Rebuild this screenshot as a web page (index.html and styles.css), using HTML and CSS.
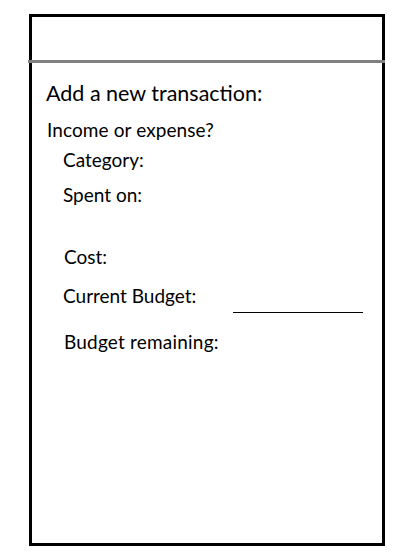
FILE: index.html
```html
<!DOCTYPE html>
<html lang="en">
<head>
<meta charset="utf-8">
<title>Add a new transaction</title>
<link rel="stylesheet" href="styles.css">
</head>
<body>
<div class="frame">
  <div class="topbar"></div>
  <div class="rule"></div>
  <div class="form">
    <h1 class="title">Add a new transaction:</h1>
    <p class="question">Income or expense?</p>
    <div class="field category">Category:</div>
    <div class="field spent">Spent on:</div>
    <div class="field cost">Cost:</div>
    <div class="field budget-row">
      <span class="label">Current Budget:</span>
      <span class="blank"></span>
    </div>
    <div class="field remaining">Budget remaining:</div>
  </div>
</div>
</body>
</html>
```
FILE: styles.css
```css
html, body {
  margin: 0;
  padding: 0;
  background: #fff;
}
body {
  font-family: Lato, "Open Sans", "Liberation Sans", sans-serif;
  color: #000;
}
.frame {
  box-sizing: border-box;
  margin: 14px 0 0 29px;
  width: 356px;
  height: 532px;
  border: 3px solid #000;
  display: flex;
  flex-direction: column;
}
.topbar {
  height: 43px;
  flex: none;
}
.rule {
  flex: none;
  height: 3px;
  margin: 0 -3px 0 -4px;
  background: #808080;
}
.form {
  padding: 17.5px 19px 0 14px;
  display: flex;
  flex-direction: column;
}
.title {
  margin: 0;
  font-size: 21.5px;
  font-weight: 400;
  line-height: 24px;
}
.question {
  margin: 14.5px 0 0 1px;
  font-size: 19px;
  line-height: 22px;
  letter-spacing: 0.1px;
}
.field {
  font-size: 19px;
  line-height: 22px;
  margin-left: 17px;
}
.category { margin-top: 8px; }
.spent { margin-top: 13px; }
.cost { margin-top: 40px; margin-left: 18px; }
.budget-row {
  margin-top: 17px;
  display: flex;
  align-items: flex-start;
  justify-content: space-between;
  height: 22px;
}
.blank {
  width: 130px;
  height: 1px;
  margin-top: 26.5px;
  background: #000;
}
.remaining { margin-top: 24px; margin-left: 18px; letter-spacing: 0.2px; }
```
